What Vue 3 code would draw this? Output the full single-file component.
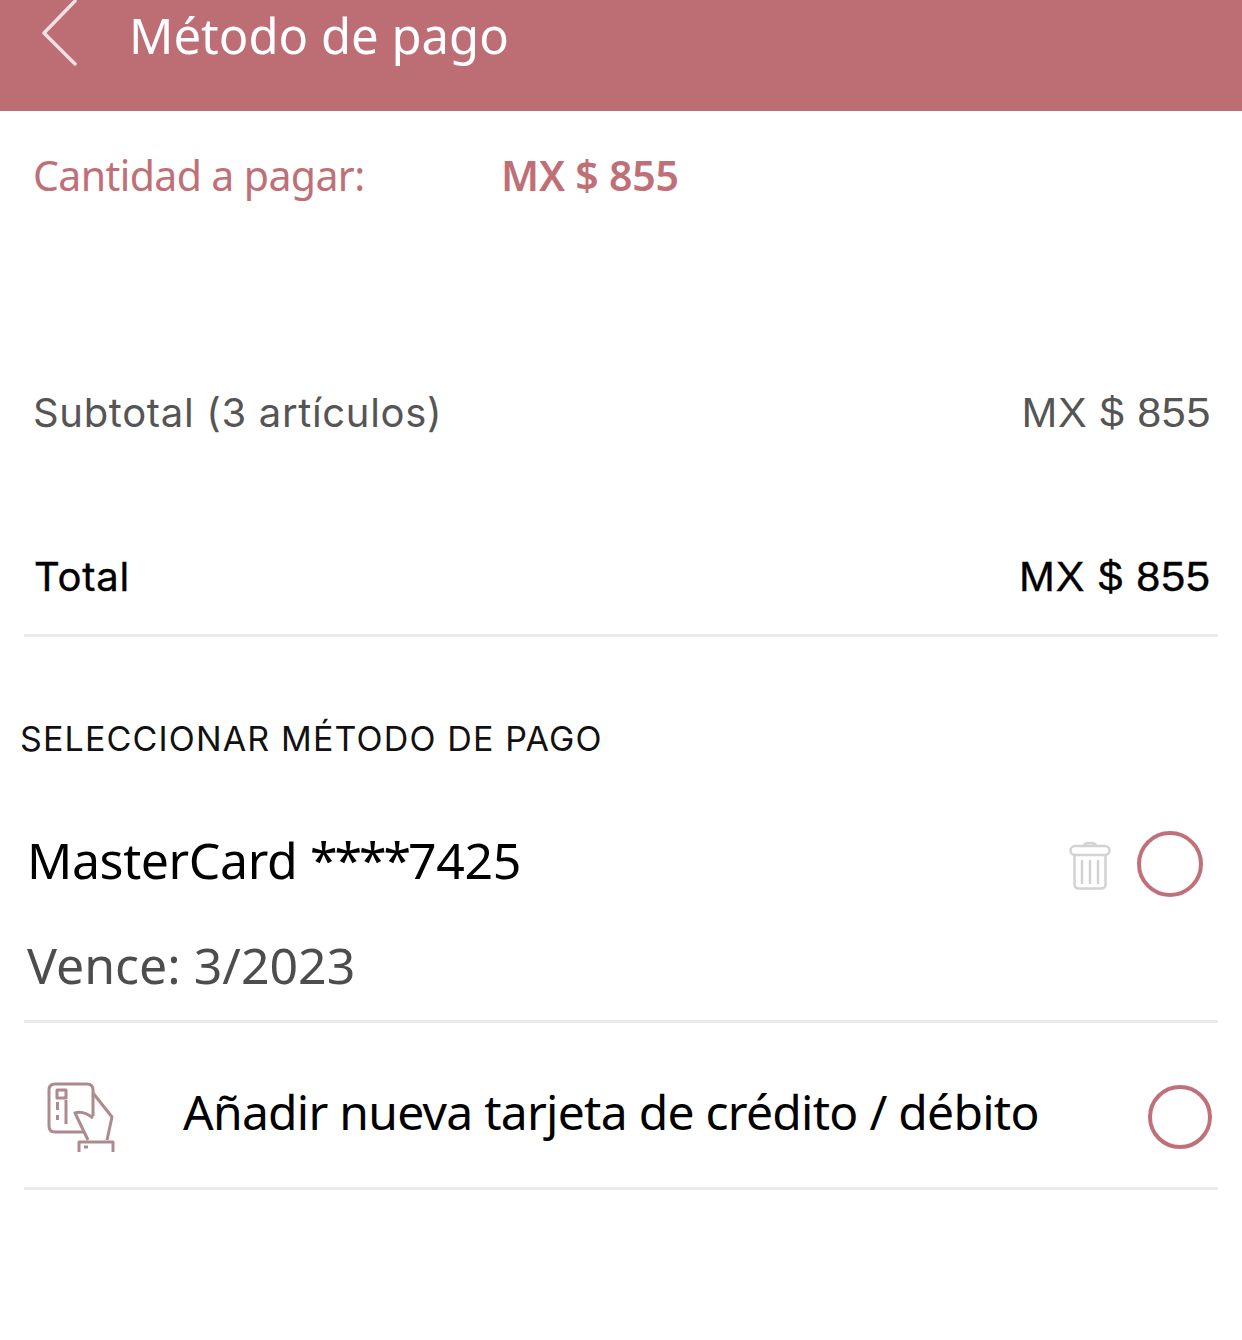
<template>
  <div class="page">
    <header class="topbar">
      <svg class="back" width="38" height="68" viewBox="0 0 38 68">
        <path d="M34 1 L3 33 L34 64" fill="none" stroke="#efe0e1" stroke-width="3.500" stroke-linecap="round" stroke-linejoin="round" />
      </svg>
      <h1 class="title">Método de pago</h1>
    </header>

    <div class="amount">
      <span class="amount-label">Cantidad a pagar:</span>
      <span class="amount-value">MX $ 855</span>
    </div>

    <div class="line subtotal">
      <span>Subtotal (3 artículos)</span>
      <span class="price">MX $ 855</span>
    </div>
    <div class="line total">
      <span>Total</span>
      <span class="price">MX $ 855</span>
    </div>

    <h2 class="section">SELECCIONAR MÉTODO DE PAGO</h2>

    <div class="card-row">
      <div class="card-info">
        <div class="card-name">MasterCard <span class="mask">****</span>7425</div>
        <div class="card-exp">Vence: 3/2023</div>
      </div>
      <svg class="trash" width="42" height="50" viewBox="0 0 42 50" fill="none" stroke="#d2d2d2" stroke-width="2.500" stroke-linecap="round" stroke-linejoin="round">
        <path d="M15 6 C15 2 27 2 27 6" />
        <rect x="1.500" y="6" width="39" height="9" rx="4.500" />
        <path d="M5.500 15 V44 Q5.500 48.500 10 48.500 H32 Q36.500 48.500 36.500 44 V15" />
        <path d="M13 21 V43 M21 21 V43 M29 21 V43" />
      </svg>
      <span class="radio radio-lg"></span>
    </div>

    <div class="add-row">
      <svg class="add-icon" width="68" height="72" viewBox="0 0 68 72" fill="none" stroke="#ad8a8e" stroke-width="3" stroke-linejoin="round">
        <path d="M38 50 H8 Q2 50 2 44 V8 Q2 2 8 2 H40 Q46 2 46 8 V34" />
        <path d="M46 11 L65 35 L60 58" />
        <path d="M46 36 Q36 28 28 31 L41 58" />
        <rect x="10" y="8" width="9" height="8" />
        <path d="M10.500 20 V28 M10.500 33 V38 M19 18 V42" />
        <path d="M32 70 V60 H66 V70" />
        <path d="M37 65 H41" />
      </svg>
      <span class="add-text">Añadir nueva tarjeta de crédito / débito</span>
      <span class="radio radio-sm"></span>
    </div>
  </div>
</template>

<script setup>
</script>

<style scoped>
.page {
  width: 1242px;
  height: 1340px;
  background: #fff;
  overflow: hidden;
  font-family: "Noto Sans", sans-serif;
}

.topbar {
  height: 111px;
  background: #bd6d74;
  display: flex;
  align-items: flex-start;
}

.back {
  margin-left: 41px;
}

.title {
  margin: 4px 0 0 50px;
  font-size: 49px;
  line-height: 62px;
  font-weight: 400;
  color: #fff;
}

.amount {
  display: flex;
  height: 132px;
  padding: 40px 0 0 33px;
  box-sizing: border-box;
  font-size: 41px;
  line-height: 48px;
  color: #c06f76;
}

.amount-label {
  width: 468px;
  letter-spacing: -0.6px;
}

.amount-value {
  font-weight: 600;
  letter-spacing: -0.2px;
}

.line {
  display: flex;
  justify-content: space-between;
  padding: 0 31px 0 33px;
  font-family: Inter, sans-serif;
  font-size: 40px;
  line-height: 48px;
}

.price {
  font-family: "Liberation Sans", sans-serif;
  font-size: 43px;
  line-height: 46px;
}

.subtotal {
  margin-top: 146px;
  color: #555;
  letter-spacing: 0.67px;
}

.total {
  margin: 116px 24px 0;
  padding: 0 7px 33px 10px;
  border-bottom: 3px solid #eaeaea;
  color: #000;
  letter-spacing: 0.8px;
  -webkit-text-stroke: 0.4px #000;
}

.total .price {
  letter-spacing: 1px;
}

.section {
  margin: 82px 0 0 20px;
  font-family: Inter, sans-serif;
  font-size: 34px;
  line-height: 40px;
  font-weight: 400;
  letter-spacing: 1.15px;
  color: #111;
}

.card-row {
  display: flex;
  align-items: flex-start;
  margin: 68px 24px 0;
  height: 193px;
  border-bottom: 3px solid #eaeaea;
}

.card-info {
  flex: 1;
  padding: 3px 0 0 3px;
}

.card-name {
  font-size: 50px;
  line-height: 60px;
  letter-spacing: -0.4px;
  color: #000;
}

.mask {
  letter-spacing: -3px;
}

.card-exp {
  margin-top: 45px;
  font-size: 50px;
  line-height: 60px;
  color: #4d4d4d;
}

.trash {
  margin-top: 13px;
  margin-right: 26px;
}

.radio {
  display: block;
  box-sizing: border-box;
  border: 4px solid #c0707a;
  border-radius: 50%;
}

.radio-lg {
  width: 66px;
  height: 66px;
  margin: 4px 15px 0 0;
}

.add-row {
  display: flex;
  align-items: center;
  margin: 0 24px;
  height: 167px;
  padding-top: 18px;
  box-sizing: border-box;
  border-bottom: 3px solid #eaeaea;
}

.add-icon {
  margin-left: 23px;
  margin-top: 7px;
}

.add-text {
  flex: 1;
  margin-left: 68px;
  margin-top: -4px;
  font-size: 48px;
  line-height: 60px;
  letter-spacing: -0.73px;
  color: #000;
}

.radio-sm {
  width: 64px;
  height: 64px;
  margin-right: 6px;
  margin-top: 6px;
}
</style>

<style>
html, body {
  margin: 0;
  background: #fff;
}
</style>
